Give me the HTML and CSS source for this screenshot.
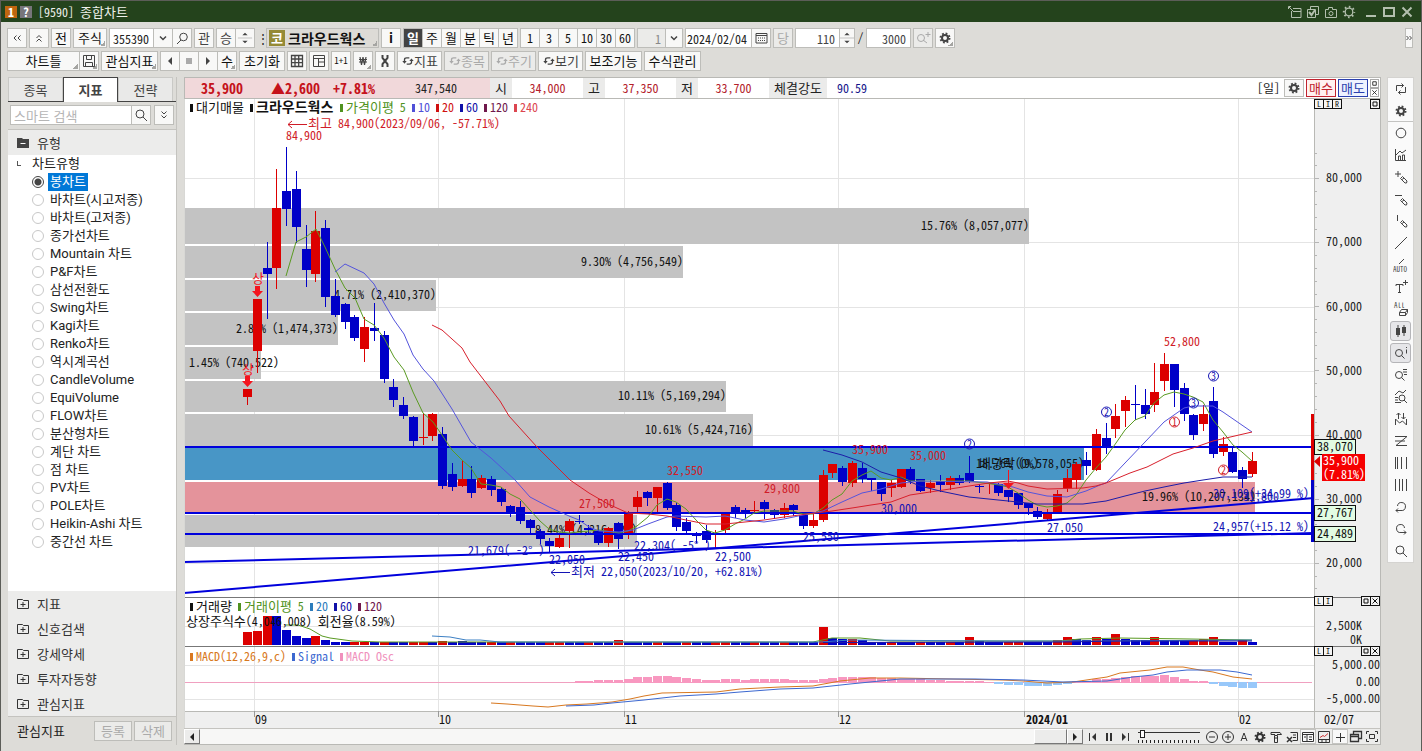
FILE: index.html
```html
<!DOCTYPE html>
<html lang="ko">
<head>
<meta charset="utf-8">
<meta name="viewport" content="width=device-width, initial-scale=1">
<title>[9590] 종합차트</title>
<link rel="stylesheet" href="styles.css">
</head>
<body>
<svg class="sprite" aria-hidden="true">
  <symbol id="gear" viewBox="0 0 16 16"><g fill="none" stroke="currentColor"><circle cx="8" cy="8" r="3" stroke-width="2"/><circle cx="8" cy="8" r="4.500" stroke-width="2" stroke-dasharray="1.770 1.770"/></g></symbol>
  <symbol id="gear-line" viewBox="0 0 16 16"><g fill="none" stroke="currentColor"><circle cx="8" cy="8" r="3.800" stroke-width="1.300"/><circle cx="8" cy="8" r="5.200" stroke-width="2" stroke-dasharray="1.600 2.480" stroke-dashoffset="0.800"/></g></symbol>
  <symbol id="search" viewBox="0 0 16 16"><path d="M10 10l4 4" stroke="currentColor"/><circle cx="7" cy="7" r="4" fill="none" stroke="currentColor"/></symbol>
  <symbol id="search-l" viewBox="0 0 16 16"><path d="M7 10l-4 4" stroke="currentColor"/><circle cx="9.500" cy="7" r="3.800" fill="none" stroke="currentColor"/></symbol>
  <symbol id="search-plus" viewBox="0 0 16 16"><path d="M8 10l4 3M13 2v5M10.500 4.500h5" stroke="currentColor"/><circle cx="6" cy="8" r="3.500" fill="none" stroke="currentColor"/></symbol>
  <symbol id="up2" viewBox="0 0 16 16"><path d="M5.500 8 8 5.500 10.500 8M5.500 11.500 8 9l2.500 2.500" fill="none" stroke="currentColor"/></symbol>
  <symbol id="down2" viewBox="0 0 16 16"><path d="M5.500 4.500 8 7l2.500-2.500M5.500 8.500 8 11l2.500-2.500" fill="none" stroke="currentColor"/></symbol>
  <symbol id="left2" viewBox="0 0 16 16"><path d="M7.500 5.500 5 8l2.500 2.500M11.500 5.500 9 8l2.500 2.500" fill="none" stroke="currentColor"/></symbol>
  <symbol id="right2" viewBox="0 0 6 16"><path d="M0.500 6 2.500 8l-2 2M3.500 6l2 2-2 2" fill="none" stroke="currentColor"/></symbol>
  <symbol id="down" viewBox="0 0 16 16"><path d="M5 6.500l3 3 3-3" fill="none" stroke="currentColor" stroke-width="1.500"/></symbol>
  <symbol id="spin" viewBox="0 0 16 18"><path d="M5 6l3-3 3 3zM5 12l3 3 3-3z" fill="currentColor"/><path d="M0 9h16" stroke="#bbb"/></symbol>
  <symbol id="cal" viewBox="0 0 16 16"><path d="M3 3.500h11v9.500H3zM3 5.500h11" fill="none" stroke="currentColor"/><path d="M5 8h7M5 10.500h7" stroke="currentColor" stroke-dasharray="1 1"/></symbol>
  <symbol id="save" viewBox="0 0 16 16"><path d="M2.500 2.500h11v11h-11zM5.500 2.500v4h5v-4M4.500 13V9.500h7V13" fill="none" stroke="currentColor"/></symbol>
  <symbol id="grid" viewBox="0 0 16 16"><path d="M2.500 2.500h11v11h-11zM2.500 6h11M2.500 9.700h11M6 2.500v11M9.700 2.500v11" fill="none" stroke="currentColor" stroke-width="1.300"/></symbol>
  <symbol id="panes" viewBox="0 0 16 16"><path d="M2.500 2.500h11v11h-11zM2.500 5.500h11M7.500 5.500v8M7.500 9h6" fill="none" stroke="currentColor"/></symbol>
  <symbol id="tri-l" viewBox="0 0 16 16"><path d="M10 4v8L6 8z" fill="currentColor"/></symbol>
  <symbol id="tri-r" viewBox="0 0 16 16"><path d="M6 4v8l4-4z" fill="currentColor"/></symbol>
  <symbol id="stop" viewBox="0 0 16 16"><path d="M5 5h6v6H5z" fill="currentColor"/></symbol>
  <symbol id="won" viewBox="0 0 16 16"><path d="M5 4l1.500 8L8 4l1.500 8L11 4M4 6.500h8M4 9h8" fill="none" stroke="currentColor" stroke-width="1.200"/></symbol>
  <symbol id="tool" viewBox="0 0 16 16"><path d="M5.500 2v3L8 8l-2.500 3v3M10.500 2v3L8 8l2.500 3v3" fill="none" stroke="currentColor" stroke-width="2"/></symbol>
  <symbol id="sync" viewBox="0 0 16 16"><path d="M4 9V6.500Q4 4.500 6.500 4.500h3M12 7v2.500q0 2-2.500 2h-3" fill="none" stroke="currentColor" stroke-width="1.500"/><path d="M1.500 8h5L4 11zM9.500 8h5L12 5z" fill="currentColor"/></symbol>
  <symbol id="rail-sync" viewBox="0 0 16 16"><path d="M3.500 10V4.500h7M12.500 6v5.500h-7M8.500 2.500l2 2-2 2M7.500 9.500l-2 2 2 2" fill="none" stroke="currentColor"/></symbol>
  <symbol id="circle" viewBox="0 0 16 16"><circle cx="8" cy="8" r="4.800" fill="none" stroke="currentColor"/></symbol>
  <symbol id="chart" viewBox="0 0 16 16"><path d="M2.500 2v11.500H13M3 8l4-4 2 2 4-3M5.500 13V9h2v4M9.500 13V8h2v5" fill="none" stroke="currentColor"/></symbol>
  <symbol id="pen-plus" viewBox="0 0 16 16"><path d="M5 2v6M2 5h6M7.500 9.500l2-2 4.500 4.500-0.500 2h-1.500zM9 10.500l2-1.500" fill="none" stroke="currentColor"/></symbol>
  <symbol id="pen-h" viewBox="0 0 16 16"><path d="M2 4.500h7M7.500 9.500l2-2 4.500 4.500-0.500 2h-1.500zM9 10.500l2-1.500" fill="none" stroke="currentColor"/></symbol>
  <symbol id="pen-v" viewBox="0 0 16 16"><path d="M4.500 2v6M7.500 9.500l2-2 4.500 4.500-0.500 2h-1.500zM9 10.500l2-1.500" fill="none" stroke="currentColor"/></symbol>
  <symbol id="slash" viewBox="0 0 16 16"><path d="M2 14 14 2" stroke="currentColor"/></symbol>
  <symbol id="auto" viewBox="0 0 16 16"><path d="M6 7l5-5" stroke="currentColor"/><text x="0" y="15" font-size="7" fill="currentColor">AUTO</text></symbol>
  <symbol id="text" viewBox="0 0 16 16"><path d="M3 7V5.500h7V7M6.500 5.500v8M5 13.500h3M12.500 1v5M10 3.500h5" fill="none" stroke="currentColor"/></symbol>
  <symbol id="erase" viewBox="0 0 16 16"><path d="M6.500 11.500l2-3h6l-2 3zv3h6l2-3v-3M12.500 14.500v-3" fill="none" stroke="currentColor"/><text x="1" y="7" font-size="7" fill="currentColor">All</text></symbol>
  <symbol id="candles" viewBox="0 0 16 16"><path d="M5 2v12M11 2v11" stroke="currentColor"/><path d="M3 5h4v7H3zM9 4h4v6H9z" fill="currentColor"/></symbol>
  <symbol id="search-i" viewBox="0 0 16 16"><circle cx="6" cy="8" r="3.500" fill="none" stroke="currentColor"/><path d="M8.500 10.500l3 3M13.500 2v1M13.500 4.500v4" stroke="currentColor"/></symbol>
  <symbol id="search-list" viewBox="0 0 16 16"><circle cx="6" cy="8" r="3.500" fill="none" stroke="currentColor"/><path d="M8.500 10.500l3 3M10 2.500h4M10 5h4M11 7.500h3" stroke="currentColor"/></symbol>
  <symbol id="search-chart" viewBox="0 0 16 16"><circle cx="9" cy="9" r="3" fill="none" stroke="currentColor"/><path d="M11 11l3 3M2 6l4-4 4 2 3-3M2 8.500h3M2 11h3M2 13.500h6" fill="none" stroke="currentColor"/></symbol>
  <symbol id="updown" viewBox="0 0 16 16"><path d="M5.500 8V2M3.500 4l2-2 2 2M10.500 2v6M8.500 6l2 2 2-2M2.500 14V8l4 4 3-2 4 4V8" fill="none" stroke="currentColor"/></symbol>
  <symbol id="zig" viewBox="0 0 16 16"><path d="M2 3.500h12M14 3.500 3 12.500h11M2 8h10" fill="none" stroke="currentColor"/></symbol>
  <symbol id="bars-l" viewBox="0 0 16 16"><path d="M2.500 2v12M4.500 2v12M8.500 2v12M13.500 2v12" stroke="currentColor"/></symbol>
  <symbol id="bars" viewBox="0 0 16 16"><path d="M2.500 2v12M6.500 2v12M9.500 2v12M13.500 2v12" stroke="currentColor"/></symbol>
  <symbol id="undo" viewBox="0 0 16 16"><path d="M4.500 7A4 4 0 1 1 8 11.500H3M5 9.500l-2 2 2 2" fill="none" stroke="currentColor"/></symbol>
  <symbol id="redo" viewBox="0 0 16 16"><path d="M11.500 7A4 4 0 1 0 8 11.500h5M11 9.500l2 2-2 2" fill="none" stroke="currentColor"/></symbol>
  <symbol id="first" viewBox="0 0 16 16"><path d="M4.500 4v8" stroke="currentColor"/><path d="M11 4v8L7 8z" fill="currentColor"/></symbol>
  <symbol id="pause" viewBox="0 0 16 16"><path d="M6 4v8M10 4v8" stroke="currentColor" stroke-width="2"/></symbol>
  <symbol id="last" viewBox="0 0 16 16"><path d="M11.500 4v8" stroke="currentColor"/><path d="M5 4v8l4-4z" fill="currentColor"/></symbol>
  <symbol id="minus-c" viewBox="0 0 16 16"><circle cx="8" cy="8" r="5.500" fill="none" stroke="currentColor"/><path d="M5 8h6" stroke="currentColor"/></symbol>
  <symbol id="plus-c" viewBox="0 0 16 16"><circle cx="8" cy="8" r="5.500" fill="none" stroke="currentColor"/><path d="M5 8h6M8 5v6" stroke="currentColor"/></symbol>
  <symbol id="a" viewBox="0 0 16 16"><path d="M5 12 8 4l3 8M6 9.500h4" fill="none" stroke="currentColor"/></symbol>
  <symbol id="brush" viewBox="0 0 16 16"><path d="M3 3.500h9l1.500 2H9M3 3.500v2h4M6.500 6.500h3v7h-3zM6.500 9h3" fill="none" stroke="currentColor"/></symbol>
  <symbol id="xls" viewBox="0 0 16 16"><path d="M6.500 3.500h7v8h-5M9 6h3M9 8.500h3" fill="none" stroke="currentColor"/><path d="M3 8l5 5M8 8l-5 5" stroke="currentColor" stroke-width="1.500"/></symbol>
  <symbol id="win" viewBox="0 0 16 16"><path d="M2.500 3.500h11v9h-11zM2.500 5.500h11M7 5.500v7M4 8h2M9 8h3M9 10.500h3" fill="none" stroke="currentColor"/></symbol>
  <symbol id="line-pane" viewBox="0 0 16 16"><path d="M2.500 2.500h11v11h-11zM2.500 10.500h11M6 10.500v3M10 10.500v3" fill="none" stroke="currentColor"/><path d="M4 8.500l3-2 1.500 1L12 4.500" fill="none" stroke="#c33"/></symbol>
  <symbol id="plus" viewBox="0 0 16 16"><path d="M8.500 4v9M4 8.500h9" stroke="currentColor"/></symbol>
  <symbol id="layers" viewBox="0 0 16 16"><path d="M5.500 5V2.500h8v7H11M2.500 5.500h8v7h-8zM2.500 7.500h8" fill="none" stroke="currentColor" stroke-width="1.300"/></symbol>
  <symbol id="full" viewBox="0 0 16 16"><path d="M5.500 5.500h5v4h-5zM2.500 5V2.500H5M11 2.500h2.500V5M2.500 10v2.500H5M11 12.500h2.500V10" fill="none" stroke="currentColor"/></symbol>
  <symbol id="t-export" viewBox="0 0 16 16"><path d="M6 4.500h8v9H4.500V7M6 7.500h8M1.500 5V2.500H4M2 3l4 4" fill="none" stroke="currentColor"/></symbol>
  <symbol id="t-check" viewBox="0 0 16 16"><path d="M5.500 5V2.500h8v8H11M2.500 5.500h8v8h-8z" fill="none" stroke="currentColor"/><path d="M4 8l2.500 3L10 6" fill="none" stroke="currentColor" stroke-width="2"/></symbol>
  <symbol id="t-cam" viewBox="0 0 16 16"><path d="M2.500 5.500h3v-2h4v2h4v8h-11z" fill="none" stroke="currentColor"/><circle cx="8" cy="9.500" r="2" fill="none" stroke="currentColor"/></symbol>
  <symbol id="t-min" viewBox="0 0 16 16"><path d="M3 12h10" stroke="currentColor" stroke-width="2"/></symbol>
  <symbol id="t-max" viewBox="0 0 16 16"><path d="M3 4h10v8H3z" fill="none" stroke="currentColor" stroke-width="2"/></symbol>
  <symbol id="t-close" viewBox="0 0 16 16"><path d="M3.500 3.500l9 9M12.500 3.500l-9 9" stroke="currentColor" stroke-width="2"/></symbol>
  <symbol id="fold-open" viewBox="0 0 16 16"><path d="M2 3h5l1 1h6v9H2z" fill="#444"/><path d="M5.500 8.500h5" stroke="#fff"/></symbol>
  <symbol id="fold" viewBox="0 0 16 16"><path d="M2.500 3.500h5l1 1h5v8h-11zM5.500 8.500h5M8 6v5" fill="none" stroke="currentColor"/></symbol>
  <symbol id="m-max" viewBox="0 0 8 8"><path d="M2 2h4v4H2z" fill="none" stroke="currentColor"/></symbol>
  <symbol id="m-close" viewBox="0 0 8 8"><path d="M1.500 1.500l5 5M6.500 1.500l-5 5" stroke="currentColor"/></symbol>
</svg>

<div class="window">
  <header class="titlebar">
    <span class="badge badge-num">1</span><span class="badge badge-help">?</span>
    <h1>[9590] <span class="ko">종합차트</span></h1>
    <div class="title-actions" id="titleActions"></div>
  </header>

  <div class="toolbars">
    <div class="toolbar">
      <button class="btn w20" aria-label="처음"><svg class="ic"><use href="#left2"/></svg></button>
      <button class="btn w20" aria-label="접기"><svg class="ic"><use href="#up2"/></svg></button>
      <button class="btn w20">전</button>
      <button class="btn w33 more">주식</button>
      <div class="group">
        <input class="field w45" aria-label="종목코드" value="355390">
        <button class="btn w20" aria-label="목록"><svg class="ic"><use href="#down"/></svg></button>
        <button class="btn w20" aria-label="검색"><svg class="ic"><use href="#search-l"/></svg></button>
      </div>
      <button class="btn w20 soft">관</button>
      <div class="group">
        <button class="btn w20 soft">승</button>
        <button class="btn w20" aria-label="이동"><svg class="ic"><use href="#spin"/></svg></button>
      </div>
      <span class="dots">⋮</span>
      <button class="btn name more"><span class="market">코</span>크라우드웍스</button>
      <button class="btn w20 strong">i</button>
      <div class="group">
        <button class="btn w20 on">일</button><button class="btn w20">주</button><button class="btn w20">월</button><button class="btn w20">분</button><button class="btn w20">틱</button><button class="btn w20">년</button>
      </div>
      <div class="group digits">
        <button class="btn w20">1</button><button class="btn w20">3</button><button class="btn w20">5</button><button class="btn w20">10</button><button class="btn w20">30</button><button class="btn w20">60</button>
      </div>
      <div class="group">
        <input class="field w30 num off" aria-label="주기" value="1">
        <button class="btn w18" aria-label="주기 목록"><svg class="ic"><use href="#down"/></svg></button>
      </div>
      <div class="group">
        <input class="field w67 date" aria-label="날짜" value="2024/02/04">
        <button class="btn w20" aria-label="달력"><svg class="ic"><use href="#cal"/></svg></button>
      </div>
      <button class="btn w20 off">당</button>
      <div class="group">
        <input class="field w45 num" aria-label="표시 개수" value="110">
        <button class="btn w16" aria-label="증감"><svg class="ic"><use href="#spin"/></svg></button>
      </div>
      <span class="dots">/</span>
      <input class="field w45 num" aria-label="전체 개수" value="3000">
      <button class="btn w20 off" aria-label="확대"><svg class="ic"><use href="#search-plus"/></svg></button>
      <button class="btn w20 more" aria-label="설정"><svg class="ic"><use href="#gear"/></svg></button>
      <button class="btn fold-right" aria-label="펼치기"><svg class="ic ic-narrow"><use href="#right2"/></svg></button>
    </div>
    <div class="toolbar">
      <div class="group">
        <button class="btn w72 more">차트틀</button>
        <button class="btn w20 more" aria-label="저장"><svg class="ic"><use href="#save"/></svg></button>
      </div>
      <button class="btn w57 more">관심지표</button>
      <div class="group">
        <button class="btn w20" aria-label="이전"><svg class="ic"><use href="#tri-l"/></svg></button>
        <button class="btn w20 dim" aria-label="정지"><svg class="ic"><use href="#stop"/></svg></button>
        <button class="btn w20" aria-label="다음"><svg class="ic"><use href="#tri-r"/></svg></button>
        <button class="btn w20 more">수</button>
      </div>
      <button class="btn w46">초기화</button>
      <button class="btn w20" aria-label="격자"><svg class="ic"><use href="#grid"/></svg></button>
      <button class="btn w20" aria-label="분할"><svg class="ic"><use href="#panes"/></svg></button>
      <button class="btn w20 tiny">1+1</button>
      <button class="btn w20 more" aria-label="원화"><svg class="ic"><use href="#won"/></svg></button>
      <button class="btn w20" aria-label="도구"><svg class="ic"><use href="#tool"/></svg></button>
      <button class="btn w45 soft"><svg class="ic ic-in"><use href="#sync"/></svg>지표</button>
      <button class="btn w45 off"><svg class="ic ic-in"><use href="#sync"/></svg>종목</button>
      <button class="btn w45 off"><svg class="ic ic-in"><use href="#sync"/></svg>주기</button>
      <button class="btn w45 soft"><svg class="ic ic-in"><use href="#sync"/></svg>보기</button>
      <button class="btn w57">보조기능</button>
      <button class="btn w57">수식관리</button>
    </div>
  </div>

  <main class="main">
    <aside class="side">
      <nav class="tabs"><button class="tab">종목</button><button class="tab active">지표</button><button class="tab">전략</button></nav>
      <div class="find">
        <input class="field find-input" aria-label="스마트 검색" placeholder="스마트 검색">
        <button class="btn w20" aria-label="찾기"><svg class="ic"><use href="#search"/></svg></button>
        <button class="btn w20 find-more" aria-label="더보기"><svg class="ic"><use href="#down2"/></svg></button>
      </div>
      <button class="section section-open"><svg class="ic"><use href="#fold-open"/></svg>유형</button>
      <fieldset class="types" id="types"><legend>차트유형</legend></fieldset>
      <button class="section"><svg class="ic"><use href="#fold"/></svg>지표</button>
      <button class="section"><svg class="ic"><use href="#fold"/></svg>신호검색</button>
      <button class="section"><svg class="ic"><use href="#fold"/></svg>강세약세</button>
      <button class="section"><svg class="ic"><use href="#fold"/></svg>투자자동향</button>
      <button class="section"><svg class="ic"><use href="#fold"/></svg>관심지표</button>
      <div class="side-foot"><span>관심지표</span><button class="btn w38 off">등록</button><button class="btn w38 off">삭제</button></div>
    </aside>

    <section class="chart">
      <div class="quote">
        <div class="quote-main"><b class="q-price">35,900</b><b class="q-diff">▲2,600</b><b class="q-rate">+7.81%</b><span class="q-vol">347,540</span></div>
        <span class="q-label">시</span><span class="q-val">34,000</span>
        <span class="q-label">고</span><span class="q-val">37,350</span>
        <span class="q-label">저</span><span class="q-val">33,700</span>
        <span class="q-label q-wide">체결강도</span><span class="q-power">90.59</span>
        <span class="q-period">[일]</span>
        <button class="btn w20" aria-label="차트 설정"><svg class="ic"><use href="#gear"/></svg></button>
        <button class="order buy">매수</button><button class="order sell">매도</button>
        <div class="mini-col"><button aria-label="최대화"><svg><use href="#m-max"/></svg></button><button aria-label="닫기"><svg><use href="#m-close"/></svg></button></div>
      </div>
      <div class="canvas">
        <svg class="plot" id="plot" viewBox="184 99 1196 629" role="img" aria-label="크라우드웍스 일봉 차트"></svg>
        <div class="pane-ctl pane-price"><button>L</button><button>I</button><button>R</button><button class="last" aria-label="최대화"><svg><use href="#m-max"/></svg></button></div>
        <div class="pane-ctl pane-vol"><button>L</button><button>I</button><button class="last" aria-label="최대화"><svg><use href="#m-max"/></svg></button><button aria-label="닫기"><svg><use href="#m-close"/></svg></button></div>
        <div class="pane-ctl pane-macd"><button>L</button><button>I</button><button class="last" aria-label="최대화"><svg><use href="#m-max"/></svg></button><button aria-label="닫기"><svg><use href="#m-close"/></svg></button></div>
      </div>
      <div class="bottom">
        <button class="sb" aria-label="왼쪽"><svg class="ic"><use href="#tri-l"/></svg></button>
        <div class="track"><div class="thumb"></div></div>
        <button class="sb" aria-label="오른쪽"><svg class="ic"><use href="#tri-r"/></svg></button>
        <div class="tools" id="player"></div>
        <input class="zoom" type="range" min="0" max="60" value="2" aria-label="간격">
        <div class="tools" id="tools"></div>
      </div>
    </section>

    <nav class="rail" id="rail"></nav>
  </main>
</div>
<script src="chart.js"></script>
</body>
</html>
```
FILE: styles.css
```css
* { box-sizing: border-box; }
body {
  margin: 0;
  font-family: "Noto Sans Mono CJK KR", "Noto Sans CJK KR", sans-serif;
  font-size: 12px;
  line-height: 16px;
  color: #222;
}
button, input { font: inherit; color: inherit; margin: 0; padding: 0; border-radius: 0; }
.sprite { display: none; }
.ic { width: 16px; height: 16px; flex: none; display: block; }
.ic text { font-family: "DejaVu Sans Mono", monospace; }
.ic-narrow { width: 6px; }
.ko { font-size: 13px; }

.window {
  min-height: 100vh;
  display: flex;
  flex-direction: column;
  background: #dddcd8;
  border: 1px solid #5c5d58;
  border-width: 1px 1px 2px;
}
.titlebar {
  display: flex;
  align-items: center;
  height: 21px;
  padding: 0 6px 0 4px;
  background: #24431c;
  color: #eef0ea;
}
.titlebar h1 { margin: 0 0 0 3px; font-size: 12px; font-weight: 400; }
.badge { width: 12px; height: 12px; margin-right: 3px; line-height: 12px; text-align: center; font-weight: 700; color: #fff; }
.badge-num { background: #c0660f; }
.badge-help { background: #77757a; }
.title-actions { display: flex; gap: 2px; margin-left: auto; color: #b3bfae; }
.title-actions button { border: 0; background: none; color: inherit; }
.title-actions button:nth-child(5) { margin-left: 4px; }

.toolbars { display: flex; flex-direction: column; gap: 3px; padding: 6px 7px; }
.toolbar { display: flex; align-items: center; gap: 2px; height: 20px; white-space: nowrap; padding-right: 1px; margin-left: -1px; }
.group { display: flex; }
.group > * + * { margin-left: -1px; }
.btn {
  display: flex;
  align-items: center;
  justify-content: center;
  flex: none;
  height: 20px;
  border: 1px solid #bdbdb9;
  background: #f8f8f7;
  color: #111;
  font-size: 13px;
  overflow: hidden;
}
.digits .btn { font-size: 12px; }
.btn .ic { color: #444; }
.btn.soft { color: #444; }
.btn.off { background: #ebebe9; color: #aaa; }
.btn.off .ic, .btn.dim .ic { color: #aaa; }
.btn.on { background: #434343; color: #fff; font-weight: 700; }
.btn.strong { font-weight: 700; }
.btn.tiny { font-size: 9px; }
.btn.more { background-image: linear-gradient(135deg, transparent 50%, #a5a5a2 50%); background-size: 5px 5px; background-repeat: no-repeat; background-position: right 1px bottom 1px; }
.field { height: 20px; border: 1px solid #bdbdb9; background: #fff; padding: 0 3px; flex: none; }
.field.num { text-align: right; padding-right: 4px; color: #444; }
.field.date { padding: 0 1px; }
.field.off { background: #ebebe9; color: #888; }
.w16 { width: 16px; } .w18 { width: 18px; } .w20 { width: 20px; } .w30 { width: 29px; }
.w33 { width: 34px; } .w38 { width: 38px; } .w45 { width: 45px; } .w46 { width: 46px; }
.w57 { width: 57px; } .w67 { width: 67px; } .w72 { width: 73px; }
.dots { width: 7px; text-align: center; }
.btn.name { width: 113px; justify-content: flex-start; gap: 3px; padding-left: 2px; background-color: #dddbd6; font-size: 14px; font-weight: 700; }
.market { width: 16px; height: 16px; background: #958a35; color: #fff; font-size: 13px; line-height: 16px; text-align: center; }
.ic-in { width: 14px; height: 16px; margin-right: -1px; }
.btn.fold-right { margin-left: auto; width: 8px; }

.main { flex: 1; display: flex; align-items: flex-start; padding: 0 7px 6px; }
.side { flex: none; width: 169px; align-self: stretch; display: flex; flex-direction: column; border-right: 1px solid #c4c3bf; margin-right: 7px; font-family: "Noto Sans CJK KR", sans-serif; }
.tabs { display: flex; height: 25px; border-bottom: 1px solid #444; }
.tab { width: 55px; border: 1px solid #c9c9c6; border-bottom: 0; background: #e9e9e8; font-size: 13px; color: #444; }
.tab.active { height: 25px; border-color: #444; background: #fff; font-weight: 700; }
.find { display: flex; padding: 3px 3px 4px 2px; }
.find-input { width: 122px; margin-right: -1px; font-size: 13px; }
.find-input::placeholder { color: #b5b5b5; }
.find-more { margin-left: 3px; }
.section { display: flex; align-items: center; gap: 6px; height: 25px; border: 0; padding: 0 7px; background: #ececeb; font-size: 13px; color: #333; text-align: left; }
.section-open { height: 26px; border-top: 1px solid #c4c3bf; }
.types { flex: 1; margin: 0; padding: 0; border: 0; min-width: 0; background: #fff; font-family: Roboto, "Noto Sans CJK KR", sans-serif; font-size: 13px; color: #222; }
.types legend { float: left; width: 100%; padding: 0 0 0 24px; line-height: 18px; background: linear-gradient(#555, #555) 9px 10px / 4px 1px no-repeat, linear-gradient(#555, #555) 9px 6px / 1px 4px no-repeat; }
.types label { clear: both; display: flex; align-items: center; gap: 4px; height: 18px; padding-left: 24px; line-height: 18px; white-space: nowrap; }
.types label span { padding: 0 2px; }
.types input { appearance: none; flex: none; width: 12px; height: 12px; border: 1px solid #c8c8c8; border-radius: 50%; background: #fff; }
.types input:checked { border-color: #444; background: radial-gradient(circle, #444 0 3px, #fff 4px); }
.types input:checked + span { background: #0078d7; color: #fff; }
.side-foot { display: flex; align-items: center; gap: 2px; height: 29px; padding: 0 4px 0 9px; border-top: 1px solid #c4c3bf; }
.side-foot span { flex: 1; font-size: 13px; }

.chart { flex: 1; min-width: 0; border: 1px solid #b9b9b5; border-width: 0 1px 1px 0; background: #fff; }
.quote { display: flex; align-items: center; height: 22px; border: 1px solid #b9b9b5; border-right: 0; white-space: nowrap; }
.quote-main { display: flex; align-items: center; align-self: stretch; width: 305px; padding-left: 16px; background: #f1d8da; color: #c5121b; font-size: 14px; }
.q-price { width: 70px; } .q-diff { width: 62px; } .q-rate { width: 66px; } .q-vol { width: 60px; padding-left: 16px; color: #222; font-size: 12px; }
.q-label { width: 22px; background: #ebebea; text-align: center; line-height: 20px; font-size: 13px; }
.q-val { width: 71px; text-align: center; color: #b3202a; }
.q-wide { width: 58px; }
.q-power { padding-left: 10px; color: #14148a; }
.q-period { margin-left: auto; padding-right: 4px; }
.quote .btn { height: 18px; }
.order { width: 30px; height: 18px; margin-left: 2px; border: 1px solid; background: #fff; font-size: 13px; line-height: 14px; }
.buy { color: #c0222e; background: #fff1f1; }
.sell { color: #2a3fae; background: #eef2ff; }
.mini-col { display: flex; flex-direction: column; gap: 0; margin: 0 1px 0 2px; }
.mini-col button { display: flex; width: 9px; height: 9px; border: 1px solid #aaa; background: #fff; overflow: hidden; }
.mini-col svg, .pane-ctl svg { width: 8px; height: 8px; flex: none; }
.mini-col svg { width: 7px; height: 7px; }

.canvas { position: relative; }
.plot { display: block; width: 100%; height: auto; }
.plot text { font-family: "Noto Sans Mono CJK KR", "Noto Sans CJK KR", sans-serif; font-size: 12px; white-space: pre; }
.plot .ko { font-size: 13px; }
.plot .title { font-size: 14px; font-weight: 700; }
.plot .mark { font-size: 10px; }
.pane-ctl { position: absolute; right: 0; width: 66px; display: flex; }
.pane-price { top: 0; }
.pane-vol { top: 79%; }
.pane-macd { top: 87%; }
.pane-ctl button { display: flex; align-items: center; justify-content: center; width: 10px; height: 10px; margin-right: -1px; border: 1px solid #111; background: #f4f4f4; font-size: 8px; line-height: 8px; color: #111; overflow: hidden; }
.pane-ctl .last { margin-left: auto; }
.pane-ctl button:last-child { margin-right: 0; }

.bottom { display: flex; align-items: center; height: 16px; background: #ececeb; border-top: 1px solid #c4c3bf; }
.sb { width: 16px; height: 15px; border: 1px solid; border-color: #fff #777 #777 #fff; background: #ececeb; overflow: hidden; }
.sb .ic { margin: -1px; }
.track { flex: 1; height: 15px; display: flex; justify-content: flex-end; background: #f7f7f6; }
.thumb { width: 33px; border: 1px solid; border-color: #fff #777 #777 #fff; background: #ececeb; }
.tools { display: flex; }
.tools button { width: 16px; height: 15px; border: 0; background: none; color: #333; overflow: hidden; }
.tools button.set { background: #f8f8f8; outline: 1px solid #c5c5c2; outline-offset: -1px; }
#player { padding: 0 5px 0 2px; }
.zoom { appearance: none; width: 62px; height: 15px; margin-right: 4px; background: linear-gradient(#333, #333) 0 3px / 100% 1px no-repeat, repeating-linear-gradient(90deg, #222 0 1px, transparent 1px 4px) 0 11px / 100% 3px no-repeat; }
.zoom::-webkit-slider-thumb { appearance: none; width: 5px; height: 8px; margin-top: -6px; border: 1px solid #222; background: #fff; }

.rail { flex: none; display: flex; flex-direction: column; width: 27px; margin-left: 6px; background: #fafafa; border: 1px solid #d4d3d0; }
.rail button { display: flex; align-items: center; justify-content: center; height: 22px; border: 0; background: none; color: #444; }
.rail button:nth-child(2) { border-bottom: 1px solid #c4c4c2; }
.rail button.set { margin: 1px 2px; height: 20px; border: 1px solid #b5b5b8; border-radius: 3px; background: #e6e6e9; }
```
FILE: chart.js
```js
const icon = (id) => `<svg class="ic"><use href="#${id}"/></svg>`;
const fill = (el, ids, on = []) => {
  document.getElementById(el).innerHTML = ids
    .map((id) => `<button aria-label="${id}"${on.includes(id) ? ' class="set"' : ''}>${icon(id)}</button>`).join('');
};
fill('titleActions', ['t-export', 't-check', 't-cam', 'gear-line', 't-min', 't-max', 't-close']);
fill('player', ['first', 'pause', 'last']);
fill('tools', ['minus-c', 'plus-c', 'a', 'gear', 'brush', 'xls', 'win', 'line-pane', 'plus', 'layers', 'full'], ['win', 'plus']);
fill('rail', ['rail-sync', 'gear', 'circle', 'chart', 'pen-plus', 'pen-h', 'pen-v', 'slash', 'auto', 'text', 'erase',
  'candles', 'search-i', 'search-list', 'search-chart', 'updown', 'zig', 'bars-l', 'bars', 'undo', 'redo', 'search'], ['candles', 'search-i']);

const types = ['봉차트', '바차트(시고저종)', '바차트(고저종)', '종가선차트', 'Mountain 차트', 'P&amp;F차트', '삼선전환도', 'Swing차트',
  'Kagi차트', 'Renko차트', '역시계곡선', 'CandleVolume', 'EquiVolume', 'FLOW차트', '분산형차트', '계단 차트', '점 차트',
  'PV차트', 'POLE차트', 'Heikin-Ashi 차트', '중간선 차트'];
document.getElementById('types').insertAdjacentHTML('beforeend', types
  .map((t, i) => `<label><input type="radio" name="type"${i ? '' : ' checked'}><span>${t}</span></label>`).join(''));

const RED = '#dc0000', BLUE = '#0000c8', LINE = '#0000dc';
let out = '';
const rect = (x, y, w, h, f, extra = '') => { out += `<rect x="${x}" y="${y}" width="${w}" height="${h}" fill="${f}" ${extra}/>`; };
const line = (x1, y1, x2, y2, c, w = 1) => { out += `<path d="M${x1} ${y1}L${x2} ${y2}" stroke="${c}" stroke-width="${w}"/>`; };
const text = (x, y, s, c = '#111', extra = '') => {
  const body = /title/.test(extra) ? s : String(s).replace(/[가-힣]+/g, (m) => `<tspan class="ko">${m}</tspan>`);
  out += `<text x="${x}" y="${y}" fill="${c}" ${extra}>${body}</text>`;
};
const poly = (pts, c, w = 1) => { out += `<polyline points="${pts}" fill="none" stroke="${c}" stroke-width="${w}"/>`; };
const END = 'text-anchor="end"';

/* grid */
rect(184, 99, 1130, 612, '#fff');
rect(1314, 99, 67, 629, '#efefef');
rect(184, 711, 1130, 17, '#efefef');
[254, 438, 624, 838, 1024, 1238].forEach((x) => line(x + .5, 99, x + .5, 711, '#e4e4e4'));
[178, 242, 307, 371, 435, 498, 563, 626, 665, 699].forEach((y) => line(184, y + .5, 1314, y + .5, '#e4e4e4'));

/* volume by price */
[[208, 36, 1029, '#c3c3c3'], [246, 32, 683, '#c3c3c3'], [280, 31, 436, '#c3c3c3'], [313, 32, 338, '#c3c3c3'],
  [347, 32, 261, '#c3c3c3'], [381, 31, 726, '#c3c3c3'], [414, 32, 753, '#c3c3c3'], [448, 32, 1084, '#4896c6'],
  [482, 31, 1255, '#e4939b'], [515, 32, 637, '#c3c3c3']].forEach(([y, h, x, c]) => rect(184, y, x - 184, h, c));
rect(184, 480, 900, 2, '#fff');
text(1029, 230, '15.76% (8,057,077)', '#111', END);
text(683, 266, '9.30% (4,756,549)', '#111', END);
text(436, 299, '4.71% (2,410,370)', '#111', END);
text(338, 333, '2.81% (1,474,373)', '#111', END);
text(189, 367, '1.45% (740,522)');
text(726, 400, '10.11% (5,169,294)', '#111', END);
text(753, 434, '10.61% (5,424,716)', '#111', END);
text(1084, 468, '18.76% (9,578,055)', '#111', END);
text(979, 468, '배당락(0%)');
text(1142, 501, '19.96% (10,207,134)');
text(535, 534, '8.44% (4,316,529)');

/* candles: high, body top, body bottom, low, direction */
const candles = `389 389 397 404 R|299 299 351 372 R|242 268 274 318 B|169 208 268 288 R|147 191 209 225 B|171 189 227 242 B|225 249 270 286 B|211 231 274 281 R|220 228 297 306 B|279 296 315 316 B
303 304 322 328 B|315 317 338 340 B|317 327 349 361 R|303 328 331 340 B|331 335 379 382 B|379 387 400 406 B|397 405 416 418 B|416 417 441 445 B|413 437 438 444 R|413 414 436 440 R
427 434 486 488 B|463 474 487 490 B|460 479 486 486 R|466 479 493 497 B|475 478 488 488 R|476 479 490 495 B|487 489 502 505 B|505 506 514 516 B|501 507 521 523 B|519 520 528 533 B
529 531 539 543 B|538 541 546 552 B|535 538 547 547 R|519 521 531 547 R|515 521 522 523 B|525 528 530 534 B|529 531 543 544 B|527 528 543 546 R|522 523 539 548 B|511 512 533 538 R
491 497 507 512 R|491 492 498 505 B|487 487 498 512 R|482 483 508 509 B|503 505 527 530 B|518 522 531 533 B|532 534 536 542 B|525 531 540 542 B|530 534 535 547 R|513 513 530 533 R
505 507 514 517 B|508 510 513 517 B|501 510 511 513 R|500 502 509 518 B|509 510 515 518 B|503 508 515 517 R|504 505 510 515 B|513 515 526 528 B|514 520 526 527 R|470 475 520 521 R
464 464 473 477 R|466 468 482 485 B|461 463 483 486 R|463 468 479 482 B|478 478 480 490 B|482 482 494 500 B|480 483 488 496 R|469 469 487 487 R|467 469 481 483 B|479 479 491 491 B
480 483 488 492 R|475 481 485 491 B|476 478 485 489 R|475 478 483 484 B|456 473 481 482 B|484 486 487 492 B|482 483 484 493 R|483 484 493 495 B|490 490 497 501 B|493 493 505 508 B
503 503 508 514 B|507 511 517 518 B|509 514 519 519 R|490 494 512 512 R|469 478 488 491 R|462 464 480 488 R|452 460 466 474 B|429 434 470 470 R|423 438 446 453 B|404 416 429 437 R
396 400 411 426 R|385 404 405 419 B|389 405 414 418 B|363 392 405 411 R|353 364 381 390 R|364 364 390 406 B|383 388 414 420 B|414 415 435 439 B|405 414 424 430 R|387 401 454 457 B
437 444 452 455 R|447 452 472 472 B|467 470 479 487 B|452 461 474 476 R`.split(/[|\n]/).map((r) => r.split(' '));
const cx = (i) => Math.floor(247.5 + 9.757 * i);
candles.forEach(([hi, top, bot, lo, d], i) => {
  const c = d === 'R' ? RED : BLUE;
  line(cx(i) + .5, +hi, cx(i) + .5, +lo + 1, c);
  rect(cx(i) - 4, +top, 9, Math.max(1, bot - top), c);
});

/* support lines and trend lines */
line(184, 447, 1314, 447, LINE, 2);
line(184, 513, 1314, 513, LINE, 2);
line(184, 534, 1314, 534, LINE, 2);
line(184, 562, 1314, 533, LINE, 2);
line(184, 593, 1314, 498, LINE, 2);

/* moving averages 5, 10, 20, 60 */
poly('286,276 296,242 306,237 316,229 325,247 335,269 345,288 355,298 364,319 374,325 384,338 394,357 404,370 413,392 423,413 433,422 442,435 452,450 462,460 471,468 481,484 491,485 501,487 510,494 520,499 530,510 540,521 549,529 559,532 569,533 579,532 599,530 619,533 628,531 637,526 648,517 657,505 667,499 676,502 686,509 696,520 706,530 715,533 725,530 735,524 745,519 754,513 764,511 793,511 803,514 813,514 823,508 832,500 842,494 852,481 862,475 871,471 881,478 891,480 901,477 910,481 930,481 969,481 999,485 1008,487 1018,493 1028,500 1037,505 1047,507 1057,506 1067,503 1076,495 1086,480 1096,468 1106,457 1116,443 1125,430 1135,420 1145,416 1154,403 1164,395 1174,392 1184,394 1193,397 1203,402 1213,420 1223,432 1233,445 1242,452 1252,461', '#5a9a22');
poly('335,272 345,264 364,273 374,284 384,303 394,320 404,334 413,355 423,369 434,381 452,409 471,442 491,458 515,480 530,497 549,507 569,516 579,520 589,527 599,531 619,532 633,530 648,524 667,517 676,516 706,517 725,516 745,520 764,522 784,519 803,515 823,511 842,502 862,493 881,489 901,483 920,481 987,482 1013,487 1028,492 1047,496 1067,497 1086,491 1100,485 1106,483 1125,463 1145,442 1164,422 1184,408 1193,406 1213,406 1223,412 1252,432', '#5454dc');
poly('432,325 442,330 462,348 470,362 500,401 509,416 537,447 570,480 589,493 608,504 628,513 648,514 667,516 686,520 706,524 725,524 745,522 764,520 784,517 807,514 832,511 852,508 871,505 891,502 910,495 930,492 950,489 969,486 989,483 1008,481 1018,483 1028,486 1047,489 1083,488 1096,486 1106,483 1130,473 1147,467 1173,454 1193,448 1213,441 1252,432', '#d8202c');
poly('823,450 842,455 862,462 881,472 901,478 920,486 940,491 969,497 1008,501 1037,504 1083,504 1106,501 1125,496 1145,491 1164,487 1184,483 1203,480 1223,477 1252,477', '#1c1ca8');

/* price labels */
const R2 = '#d01c28', B2 = '#1414b4';
[[286, 140, '84,900'], [579, 508, '27,500'], [667, 475, '32,550'], [764, 493, '29,800'], [852, 454, '35,900'],
  [910, 460, '35,000'], [1164, 346, '52,800']].forEach(([x, y, s]) => text(x, y, s, R2));
[[549, 564, '22,050'], [618, 561, '22,450'], [715, 561, '22,500'], [803, 541, '25,550'], [881, 513, '30,000'], [1047, 532, '27,050'],
  [1243, 501, '31,800'], [468, 555, '21,679( -2° )'], [634, 550, '22,304( -5° )'], [1213, 498, '30,109(+34.99 %)'],
  [1213, 531, '24,957(+15.12 %)']].forEach(([x, y, s]) => text(x, y, s, B2));
text(308, 128, '최고 84,900(2023/09/06, -57.71%)', R2);
poly('307,124.5 288,124.5', R2); poly('292,121 288,124.5 292,128', R2);
text(571, 576, '최저 22,050(2023/10/20, +62.81%)', B2);
poly('570,572.5 551,572.5', B2); poly('555,569 551,572.5 555,576', B2);

[[969, 444, 2, B2], [1106, 412, 2, B2], [1213, 376, 3, B2], [1193, 403, 3, B2], [1174, 422, 1, R2], [1223, 470, 2, R2]].forEach(([x, y, n, c]) => {
  out += `<circle cx="${x}.5" cy="${y}" r="5" fill="none" stroke="${c}"/>`;
  text(x + .5, y + 4, n, c, 'text-anchor="middle" class="mark"');
});
const arrow = (x, y) => { out += `<path d="M${x - 2} ${y}h5v5h3l-5.500 6-5.500-6h3z" fill="#f4141e"/>`; };
text(252, 283, '상', '#f4141e'); arrow(257, 286);
text(242, 374, '상', '#f4141e'); arrow(247, 376);
line(1008.5, 470, 1008.5, 484, '#f4141e'); out += '<path d="M1003 483h11l-5.500 6z" fill="#f4141e"/>';

/* legends */
const legend = (y, items) => items.forEach(([x, s, c, b]) => {
  rect(x, y - 8, 3, 8, c); text(x + 6, y, s, c, b ? 'class="title"' : '');
});
legend(112, [[190, '대기매물', '#111'], [250, '크라우드웍스', '#111', 1], [340, '가격이평 5', '#4f9220'], [412, '10', '#5050d8'],
  [436, '20', '#d01010'], [460, '60', '#1010a8'], [484, '120', '#70184c'], [514, '240', '#dc4650']]);

/* volume pane */
const vol = { 0: 13, 1: 14, 2: 29, 3: 29, 4: 15, 5: 9, 6: 7, 7: 9, 8: 5, 20: 4, 22: 4, 38: 5, 59: 18, 60: 7, 61: 6, 62: 6, 63: 5, 74: 8, 75: 4, 83: 5, 84: 8, 85: 6, 86: 5, 87: 8, 88: 6, 89: 11, 90: 6, 91: 5, 92: 5, 93: 8, 94: 5, 95: 5, 96: 5, 97: 5, 98: 6, 99: 8, 102: 5 };
const volRed = new Set([0, 1, 2, 7, 11, 12, 14, 17, 18, 20, 25, 27, 31, 32, 35, 38, 42, 45, 48, 49, 52, 55, 59, 62, 66, 69, 72, 74, 78, 79, 83, 84, 87, 89, 93, 97, 98, 99, 102]);
candles.forEach((_, i) => { const h = vol[i] || 3; rect(cx(i) - 4, 645 - h, 9, h, volRed.has(i) ? RED : BLUE); });
poly('286,625 298,625 310,629 322,636 330,638 352,641 380,642 560,642 680,642 813,642 832,638 860,638 890,641 1060,641 1080,639 1120,638 1190,639 1252,640', '#5a9a22');
poly('432,636 450,637 466,640 480,640 500,642 820,642 850,640 1000,641 1100,641 1252,640', '#3c80c4');
poly('823,642.5 1060,642 1120,641 1252,641', '#1c1ca8');
legend(611, [[190, '거래량', '#111'], [238, '거래이평 5', '#4f9220'], [310, '20', '#2c7cbc'], [334, '60', '#1010a8'], [358, '120', '#70184c']]);
text(186, 626, '상장주식수(4,046,008) 회전율(8.59%)');

/* MACD pane */
line(184, 682.5, 1312, 682.5, '#f0a0c0');
const osc = [1, 1, 2, 2, 2, 3, 5, 5, 6, 6, 5, 4, 3, 2, 2, 3, 3, 2, 3, 3, 3, 3, 2, 2, 2, 3, 4, 5, 5, 5, 5, 4, 4, 3, 3, 3, 2, 2, 1, 1, 1, 1, 0, -1, -2, -2, -3, -3, -3, -2, -1, 1, 1, 3, 3, 4, 5, 6, 6, 6, 7, 5, 3, 1, 1, -1, -3, -4, -5, -5];
osc.forEach((v, k) => { const x = cx(k + 34) - 4; if (v > 0) rect(x, 682 - v, 9, v + 1, '#f898c0'); else if (v) rect(x, 682, 9, 1 - v, '#98c8fa'); });
poly('491,703 507,704 533,706 548,707 566,705 587,704 612,702 630,699 644,696 662,693 716,692 740,689 780,687 813,686 840,681 870,678 900,678 1003,680 1023,681 1047,683 1073,682 1093,679 1107,677 1120,673 1150,670 1167,667 1183,667 1200,670 1213,672 1233,677 1252,679', '#d87820');
poly('566,706 594,705 612,703 644,700 680,696 716,694 740,692 780,689 813,688 850,684 880,681 900,679 975,679 1023,680 1063,682 1107,681 1133,677 1153,675 1167,672 1187,670 1220,670 1237,672 1252,675', '#3c68d0');
legend(661, [[190, 'MACD(12,26,9,c)', '#d87820'], [292, 'Signal', '#3c68d0'], [340, 'MACD Osc', '#f090bc']]);

/* pane borders and axes */
[597, 646].forEach((y) => line(184, y + .5, 1381, y + .5, '#777'));
line(184, 711.5, 1381, 711.5, '#b9b9b5');
line(1314.5, 99, 1314.5, 728, '#b9b9b5');
line(184.5, 99, 184.5, 728, '#d8d8d5');
for (let k = 0; k < 35; k += 1) { const y = Math.round(152.5 + k * 12.82); line(1315, y + .5, 1317 + (k % 5 === 2 ? 2 : 0), y + .5, '#b5b5b5'); }
[[182, '80,000'], [246, '70,000'], [311, '60,000'], [375, '50,000'], [439, '40,000'], [503, '30,000'], [567, '20,000']].forEach(([y, s]) => text(1362, y, s, '#222', END));
text(1362, 630, '2,500K', '#222', END); text(1362, 644, '0K', '#222', END);
text(1380, 669, '5,000.00', '#222', END); text(1380, 686, '0.00', '#222', END); text(1380, 703, '-5,000.00', '#222', END);
rect(1311, 414, 3, 66, RED); rect(1311, 480, 3, 62, BLUE);
[[439, '38,070'], [505, '27,767'], [526, '24,489']].forEach(([y, s]) => { rect(1314.5, y + .5, 41, 15, '#e2fbe2', 'stroke="#111"'); text(1317, y + 12, s); });
rect(1322, 454, 43, 27, '#f60000'); text(1323, 465, '35,900', '#fff'); text(1323, 479, '(7.81%)', '#fff');
out += `<path d="M1320 456v11l-6-5.500z" fill="${RED}"/>`;
[[255, '09'], [439, '10'], [625, '11'], [839, '12'], [1239, '02'], [1324, '02/07']].forEach(([x, s]) => text(x, 724, s));
[254, 438, 624, 838, 1024, 1238].forEach((x) => line(x + .5, 711, x + .5, 717, '#999'));
text(1026, 724, '2024/01', '#111', 'font-weight="700"');

document.getElementById('plot').innerHTML = out;
```
